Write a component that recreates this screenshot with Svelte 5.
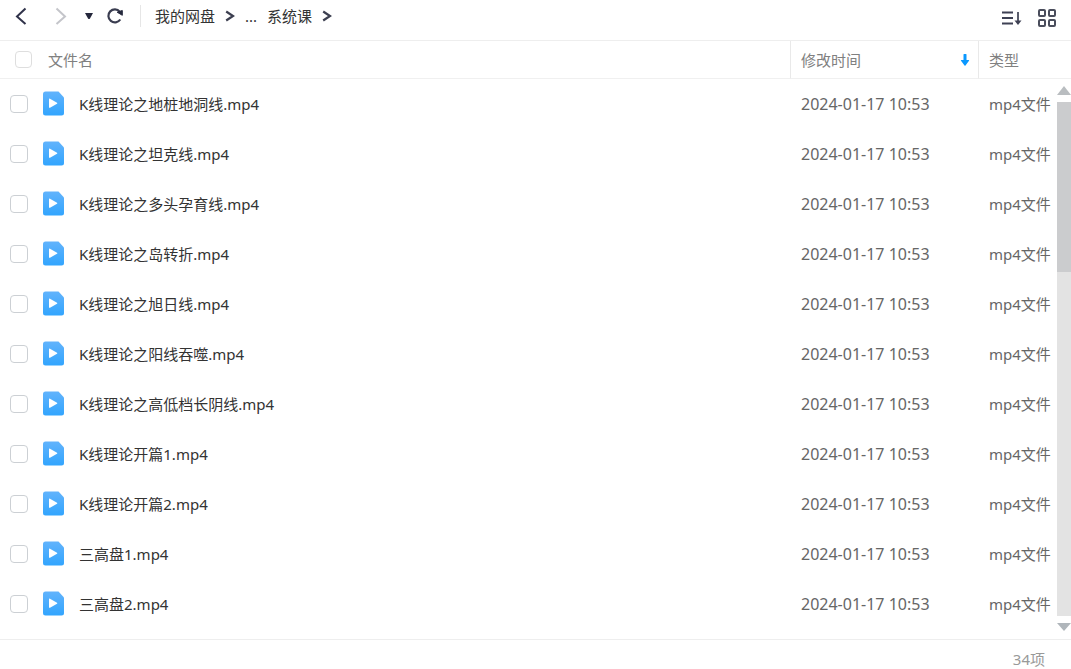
<script>
  const names = [
    'K线理论之地桩地洞线.mp4',
    'K线理论之坦克线.mp4',
    'K线理论之多头孕育线.mp4',
    'K线理论之岛转折.mp4',
    'K线理论之旭日线.mp4',
    'K线理论之阳线吞噬.mp4',
    'K线理论之高低档长阴线.mp4',
    'K线理论开篇1.mp4',
    'K线理论开篇2.mp4',
    '三高盘1.mp4',
    '三高盘2.mp4'
  ];

  let files = $state(names.map((name, id) => ({
    id,
    name,
    modified: '2024-01-17 10:53',
    type: 'mp4文件',
    checked: false
  })));
  let total = 34;

  let allChecked = $derived(files.every(f => f.checked));

  function toggleAll(event) {
    const checked = event.currentTarget.checked;
    files.forEach(f => (f.checked = checked));
  }
</script>

{#snippet crumbArrow()}
  <svg class="crumb-arrow" width="10" height="12" viewBox="0 0 10 12" aria-hidden="true">
    <path d="M1.200 1.500 8 6 1.200 10.500" fill="none" stroke="#3c3f50" stroke-width="2.200" />
  </svg>
{/snippet}

<div class="page">
  <header class="toolbar">
    <button class="back" aria-label="后退">
      <svg width="12" height="18" viewBox="0 0 12 18">
        <path d="M10.500 1.500 2 9.500l8.500 7.500" fill="none" stroke="#30334a" stroke-width="2" />
      </svg>
    </button>
    <button class="forward" aria-label="前进">
      <svg width="12" height="18" viewBox="0 0 12 18">
        <path d="M1.500 1.500 10 9.500l-8.500 7.500" fill="none" stroke="#c4c5ca" stroke-width="2" />
      </svg>
    </button>
    <button class="history" aria-label="历史记录">
      <svg width="10" height="8" viewBox="0 0 10 8">
        <path d="M1 1h8L6 6.500Q5 7.500 4 6.500z" fill="#25283c" />
      </svg>
    </button>
    <button class="refresh" aria-label="刷新">
      <svg width="18" height="18" viewBox="0 0 18 18">
        <path d="M14.300 12.500A6.500 6.500 0 1 1 13.800 4.600" fill="none" stroke="#3a3d50" stroke-width="2.200" />
        <path d="M11.200 5.200 16.300 3.500V8.300z" fill="#25283c" stroke="#25283c" stroke-linejoin="round" />
      </svg>
    </button>

    <nav class="crumbs" aria-label="路径">
      <a href="#root">我的网盘</a>
      {@render crumbArrow()}
      <a href="#more">...</a>
      <a href="#course">系统课</a>
      {@render crumbArrow()}
    </nav>

    <div class="views">
      <button aria-label="排序">
        <svg width="22" height="18" viewBox="0 0 22 18">
          <path d="M1 3.500h11M1 9h11M1 14.500h11" fill="none" stroke="#3e4154" stroke-width="2" />
          <path d="M17 3v10" fill="none" stroke="#5a5d6c" stroke-width="2" />
          <path d="M13.500 11.500h7L17 16z" fill="#3e4154" />
        </svg>
      </button>
      <button aria-label="网格视图">
        <svg width="18" height="18" viewBox="0 0 18 18">
          <g fill="none" stroke="#4a4d5c" stroke-width="2">
            <rect x="1" y="1" width="6" height="6" rx="1" />
            <rect x="11" y="1" width="6" height="6" rx="1" />
            <rect x="1" y="11" width="6" height="6" rx="1" />
            <rect x="11" y="11" width="6" height="6" rx="1" />
          </g>
        </svg>
      </button>
    </div>
  </header>

  <main>
    <table>
      <thead>
        <tr>
          <th>
            <div class="name-head">
              <input id="all" type="checkbox" checked={allChecked} onchange={toggleAll} />
              <label for="all">文件名</label>
            </div>
          </th>
          <th class="modified">
            <button class="sort">
              修改时间
              <svg width="10" height="14" viewBox="0 0 10 14" aria-hidden="true">
                <path d="M3.500 1.500Q3.500 1 4 1h2q.500 0 .500.500V7h2.200q.800 0 .300.700L5.500 12.500q-.500.600-1 0L1 7.700Q.500 7 1.300 7h2.200z" fill="#0a98ff" />
              </svg>
            </button>
          </th>
          <th class="type">类型</th>
        </tr>
      </thead>
      <tbody>
        {#each files as file (file.id)}
          <tr>
            <td>
              <div class="name-cell">
                <input id="file-{file.id}" type="checkbox" bind:checked={file.checked} />
                <svg width="22" height="26" viewBox="0 0 22 26" aria-hidden="true">
                  <defs>
                    <linearGradient id="fill-{file.id}" x1="0" y1="0" x2="0" y2="1">
                      <stop offset="0" stop-color="#62b3fc" />
                      <stop offset="1" stop-color="#32a5fe" />
                    </linearGradient>
                  </defs>
                  <path d="M2.500.500H15.500l5.500 6v15.500q0 2.500-2.500 2.500h-16Q0 24.500 0 22v-19Q0 .500 2.500.500z" fill="url(#fill-{file.id})" />
                  <path d="M6 8.200q0-1 1-.500l7 4q.800.500 0 1l-7 4q-1 .500-1-.500z" fill="#fff" />
                </svg>
                <label for="file-{file.id}">{file.name}</label>
              </div>
            </td>
            <td class="modified">{file.modified}</td>
            <td class="type">{file.type}</td>
          </tr>
        {/each}
      </tbody>
    </table>

    <div class="scrollbar">
      <button aria-label="向上滚动">
        <svg width="14" height="10" viewBox="0 0 14 10"><path d="M7 0l7 9H0z" fill="#b9bdc0" /></svg>
      </button>
      <div class="track"><div class="thumb"></div></div>
      <button aria-label="向下滚动">
        <svg width="14" height="10" viewBox="0 0 14 10"><path d="M0 1h14L7 9z" fill="#b0b6bb" /></svg>
      </button>
    </div>
  </main>

  <footer>{total}项</footer>
</div>

<style>
  :global(body) {
    margin: 0;
    background: #fff;
  }

  .page {
    display: flex;
    flex-direction: column;
    height: 100vh;
    overflow: hidden;
    font-family: "Noto Sans", "Noto Sans CJK SC", sans-serif;
    font-size: 15px;
    line-height: 20px;
    color: #333;
  }

  button {
    display: flex;
    align-items: center;
    padding: 0;
    border: 0;
    background: none;
    color: inherit;
    font: inherit;
    cursor: pointer;
  }

  svg {
    display: block;
    flex: none;
  }

  .toolbar {
    display: flex;
    align-items: center;
    box-sizing: border-box;
    height: 41px;
    padding: 0 15px 8px;
    border-bottom: 1px solid #eee;
  }

  .forward {
    margin-left: 28px;
  }

  .history {
    margin-left: 17px;
  }

  .refresh {
    margin-left: 12px;
  }

  .crumbs {
    display: flex;
    align-items: center;
    gap: 10px;
    height: 22px;
    margin-left: 16px;
    padding-left: 14px;
    border-left: 1px solid #e6e6e6;
  }

  .crumbs a {
    color: #333;
    text-decoration: none;
  }

  .views {
    display: flex;
    gap: 15px;
    margin-left: auto;
    padding-top: 3px;
  }

  main {
    position: relative;
    flex: 1;
    min-height: 0;
    overflow: hidden;
  }

  table {
    width: 100%;
    table-layout: fixed;
    border-spacing: 0;
  }

  th,
  td {
    box-sizing: border-box;
    padding: 0;
    text-align: left;
    font-weight: 400;
    white-space: nowrap;
  }

  th {
    height: 38px;
    border-bottom: 1px solid #f0f0f0;
    color: #808080;
  }

  td {
    height: 50px;
    color: #666;
  }

  .modified {
    width: 188px;
    padding: 0 8px 0 11px;
  }

  .type {
    width: 93px;
    padding-left: 11px;
  }

  th.modified,
  th.type {
    padding-left: 10px;
    border-left: 1px solid #e9e9e9;
  }

  td.modified {
    font-size: 16px;
  }

  .sort {
    justify-content: space-between;
    width: 100%;
  }

  .name-head,
  .name-cell {
    display: flex;
    align-items: center;
  }

  .name-head {
    gap: 16px;
    padding-left: 15px;
  }

  .name-cell {
    gap: 14px;
    padding-left: 10px;
  }

  .name-cell input {
    margin-right: 1px;
  }

  .name-cell label {
    color: #333;
  }

  input {
    appearance: none;
    box-sizing: border-box;
    flex: none;
    width: 18px;
    height: 18px;
    margin: 0;
    border: 1px solid #ccd0d4;
    border-radius: 4px;
    background: #fff;
  }

  .name-head input {
    width: 17px;
    height: 17px;
    border-color: #dedede;
  }

  input:checked {
    border-color: #32a5fe;
    background: #32a5fe;
  }

  .scrollbar {
    position: absolute;
    top: 38px;
    right: 0;
    bottom: 0;
    display: flex;
    flex-direction: column;
    gap: 6px;
    padding: 7px 0;
  }

  .track {
    flex: 1;
    background: #e3e3e3;
  }

  .thumb {
    height: 33%;
    background: #cbccce;
  }

  footer {
    box-sizing: border-box;
    height: 30px;
    padding: 9px 26px 0 0;
    border-top: 1px solid #eee;
    color: #999;
    text-align: right;
  }
</style>
